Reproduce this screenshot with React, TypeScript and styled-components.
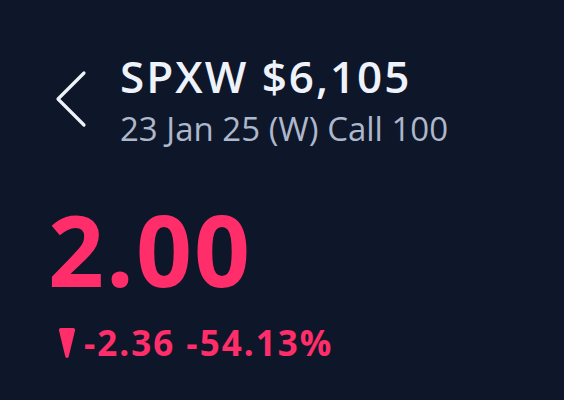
import React from "react";
import styled, { createGlobalStyle } from "styled-components";

const Global = createGlobalStyle`
  html, body { margin: 0; padding: 0; background: #0e1729; }
  body { font-family: "Open Sans", "Noto Sans", sans-serif; }
`;

const Screen = styled.div`
  width: 564px;
  height: 400px;
  box-sizing: border-box;
  background: #0e1729;
  padding: 50px 0 0 48px;
  display: flex;
  flex-direction: column;
  overflow: hidden;
`;

const Header = styled.div`
  display: flex;
  align-items: flex-start;
  gap: 32px;
`;

const BackButton = styled.button`
  background: none;
  border: none;
  padding: 0;
  margin: 20px 0 0 6px;
  width: 34px;
  height: 58px;
  display: flex;
  cursor: pointer;
`;

const TitleBlock = styled.div`
  display: flex;
  flex-direction: column;
`;

const Title = styled.div`
  font-size: 44px;
  line-height: 52px;
  font-weight: 600;
  letter-spacing: 2px;
  color: #eef2fa;
`;

const Subtitle = styled.div`
  margin-top: 7px;
  font-size: 33px;
  line-height: 40px;
  font-weight: 400;
  color: #aeb8cc;
`;

const Price = styled.div<{ $color: string }>`
  margin-top: 50px;
  font-size: 98px;
  line-height: 100px;
  font-weight: 700;
  letter-spacing: 2px;
  color: ${(p) => p.$color};
`;

const ChangeRow = styled.div<{ $color: string }>`
  margin-top: 24px;
  display: flex;
  align-items: center;
  gap: 8px;
  color: ${(p) => p.$color};
  font-size: 35px;
  line-height: 40px;
  font-weight: 700;
  letter-spacing: 2px;
`;

const Arrow = styled.svg`
  margin-left: 10px;
  flex: none;
`;

const PINK = "#ff2e6b";

export default function App() {
  return (
    <>
      <Global />
      <Screen>
        <Header>
          <BackButton aria-label="Back">
            <svg width="34" height="58" viewBox="0 0 34 58">
              <path
                d="M30 3 L4 29 L30 55"
                fill="none"
                stroke="#eef2fa"
                strokeWidth="3.2"
                strokeLinecap="round"
                strokeLinejoin="round"
              />
            </svg>
          </BackButton>
          <TitleBlock>
            <Title>SPXW $6,105</Title>
            <Subtitle>23 Jan 25 (W) Call 100</Subtitle>
          </TitleBlock>
        </Header>
        <Price $color={PINK}>2.00</Price>
        <ChangeRow $color={PINK}>
          <Arrow width="18" height="32" viewBox="0 0 18 32">
            <path
              d="M3 1 H15 Q17.5 1 17 3.5 L10.6 30 Q9 32 7.4 30 L1 3.5 Q0.5 1 3 1 Z"
              fill={PINK}
            />
          </Arrow>
          <span>-2.36 -54.13%</span>
        </ChangeRow>
      </Screen>
    </>
  );
}
